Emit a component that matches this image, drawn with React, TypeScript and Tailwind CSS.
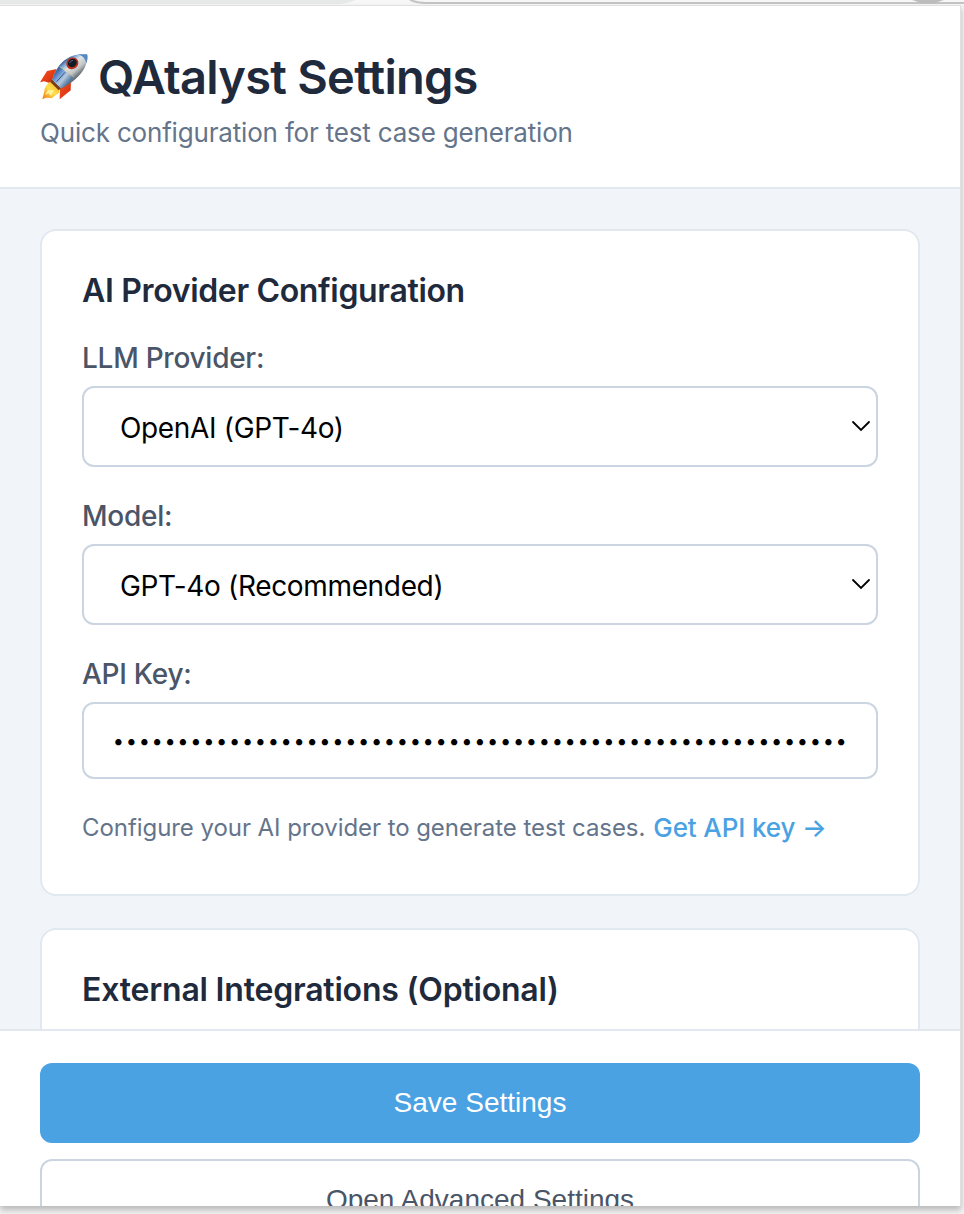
import React from "react";

function Rocket() {
  return (
    <svg className="h-[50px] w-[52px] shrink-0" viewBox="24 36 156 150" aria-hidden="true">
      <defs>
        <linearGradient id="hull" gradientUnits="userSpaceOnUse" x1="100" y1="62" x2="142" y2="112">
          <stop offset="0" stopColor="#2f5788" />
          <stop offset="0.18" stopColor="#7ba6d8" />
          <stop offset="0.38" stopColor="#dfe5e6" />
          <stop offset="0.7" stopColor="#c3c6c5" />
          <stop offset="1" stopColor="#59636c" />
        </linearGradient>
        <linearGradient id="body" gradientUnits="userSpaceOnUse" x1="74" y1="96" x2="116" y2="132">
          <stop offset="0" stopColor="#34598a" />
          <stop offset="0.3" stopColor="#6f9ddb" />
          <stop offset="0.6" stopColor="#b5c9dc" />
          <stop offset="1" stopColor="#3f6697" />
        </linearGradient>
        <linearGradient id="fin" x1="0" y1="0" x2="1" y2="1">
          <stop offset="0" stopColor="#f4511d" />
          <stop offset="0.6" stopColor="#e23a15" />
          <stop offset="1" stopColor="#98200e" />
        </linearGradient>
        <linearGradient id="flame" x1="1" y1="0" x2="0" y2="1">
          <stop offset="0" stopColor="#f6a81c" />
          <stop offset="0.5" stopColor="#ffe04d" />
          <stop offset="1" stopColor="#f07818" />
        </linearGradient>
      </defs>
      <path d="M80 87 L51 93 L30 127 L42 124 L66 131 Z" fill="url(#fin)" />
      <path d="M90 147 L123 120 L122 151 L89 178 Z" fill="url(#fin)" />
      <path d="M64 123 C54 128 42 144 43 154 L37 178 L48 173 L65 175 L87 158 L88 145 Z" fill="url(#flame)" />
      <path d="M54 150 L45 165 L55 160 L63 167 L72 151" fill="#fff39a" />
      <path d="M67 118 L94 145 L86 151 L60 125 Z" fill="#7d3c19" />
      <path d="M67 119 C72 98 88 70 108 58 C128 43 148 42 171 43 C174 48 172 66 165 81 C153 107 121 134 93 145 Z" fill="url(#hull)" />
      <path d="M67 119 C70 105 79 91 88 80 L131 112 C119 128 106 139 93 145 Z" fill="url(#body)" />
      <path d="M143 43 L171 43 C174 48 173 59 169 70 C166 55 157 47 143 43 Z" fill="#5487c5" />
      <path d="M89 80 Q112 88 131 112" fill="none" stroke="#e2c36f" strokeWidth="2" />
      <path d="M80 125 L105 97" stroke="#3d5571" strokeWidth="3" />
      <ellipse cx="127" cy="70" rx="19" ry="17" transform="rotate(-38 127 70)" fill="#b9301d" />
      <ellipse cx="127" cy="69" rx="14" ry="12" transform="rotate(-38 127 69)" fill="#151b25" />
      <path d="M119 69 Q120 62 129 61" stroke="#55637a" strokeWidth="3" fill="none" />
    </svg>
  );
}

function FieldLabel({ text }: { text: string }) {
  return (
    <div className="mb-2 h-[42px] pt-[5px] text-[28px] leading-[34px] font-medium tracking-[-0.26px] whitespace-nowrap text-[#4a5568]">
      {text}
    </div>
  );
}

function SelectField({ label, value }: { label: string; value: string }) {
  return (
    <div className="mb-[27px]">
      <FieldLabel text={label} />
      <div className="flex h-[81px] items-center justify-between rounded-xl border-2 border-[#cbd5e1] bg-white pr-[5px] pl-[36px] text-[28px] text-black">
        <span className="pt-[2px] tracking-[-0.34px] whitespace-nowrap">{value}</span>
        <svg className="mb-[2px] h-3 w-5" viewBox="0 0 20 12" fill="none" stroke="black" strokeWidth="1.8" strokeLinecap="round">
          <path d="M2 2 L10 10 L18 2" />
        </svg>
      </div>
    </div>
  );
}

const keyCharacters = Array.from("•".repeat(57));

export default function App() {
  return (
    <div className="relative flex h-[1214px] w-[964px] flex-col overflow-hidden bg-[#f3f3f3] font-['Inter','Liberation_Sans',sans-serif]">
      <svg className="h-[5px] w-full shrink-0" viewBox="0 0 964 5">
        <rect width="964" height="5" fill="#f7f7f7" />
        <path d="M0 0 H355 Q348 4 338 4 H0 Z" fill="#e7e9e8" />
        <path d="M409 -1 Q415 3 426 3 H964" fill="none" stroke="#c4c4c4" strokeWidth="2" />
        <path d="M912 0 H944 Q928 7 912 0" fill="#bdbdbd" />
      </svg>
      <div className="flex h-[1201px] w-[961px] shrink-0 flex-col overflow-hidden border-t border-r border-[#e0e0e0] bg-white shadow-[0_4px_6px_rgba(0,0,0,0.24)]">
        <header className="h-[183px] shrink-0 border-b-2 border-[#e2e8f0] pl-[38px]">
          <div className="flex h-[102px] items-end pb-[6px]">
            <Rocket />
            <h1 className="ml-[8px] text-[47px] leading-[50px] font-semibold tracking-[-0.74px] whitespace-nowrap text-[#1f2a3d]">QAtalyst Settings</h1>
          </div>
          <p className="ml-[2px] pt-[9px] text-[26px] leading-[32px] tracking-[-0.18px] whitespace-nowrap text-[#64748b]">Quick configuration for test case generation</p>
        </header>
        <main className="h-[840px] shrink-0 overflow-hidden bg-[#f1f5fa] px-10 pt-10">
          <section className="h-[667px] rounded-2xl border-2 border-[#e2e8f0] bg-white px-10 pt-[38px]">
            <h2 className="mb-[23px] text-[32px] leading-[44px] font-semibold tracking-[-0.34px] whitespace-nowrap text-[#1f2a3d]">AI Provider Configuration</h2>
            <SelectField label="LLM Provider:" value="OpenAI (GPT-4o)" />
            <SelectField label="Model:" value="GPT-4o (Recommended)" />
            <FieldLabel text="API Key:" />
            <div className="flex h-[77px] items-center rounded-xl border-2 border-[#cbd5e1] pl-[28px]">
              {keyCharacters.map((character, index) => (
                <span key={index} className="w-[12.91px] shrink-0 text-center text-[20px] leading-[30px] text-black">{character}</span>
              ))}
            </div>
            <p className="mt-[31px] flex items-center gap-2 leading-[34px] whitespace-nowrap">
              <span className="pt-px text-[24px] tracking-[-0.06px] text-[#64748b]">Configure your AI provider to generate test cases.</span>
              <a className="text-[26px] font-medium tracking-[-0.12px] text-[#4aa2e3]">Get API key →</a>
            </p>
          </section>
          <section className="mt-8 h-[667px] rounded-2xl border-2 border-[#e2e8f0] bg-white px-10 pt-[38px]">
            <h2 className="text-[32px] leading-[44px] font-semibold tracking-[-0.2px] whitespace-nowrap text-[#1f2a3d]">External Integrations (Optional)</h2>
          </section>
        </main>
        <footer className="flex h-[177px] shrink-0 flex-col gap-4 overflow-hidden border-t-2 border-[#e2e8f0] bg-white px-10 pt-8 font-['Liberation_Sans',Arial,sans-serif]">
          <button className="h-20 shrink-0 rounded-xl bg-[#4aa2e3] text-[28px] text-white">Save Settings</button>
          <button className="h-[81px] shrink-0 rounded-xl border-2 border-[#cbd5e1] bg-white pt-px text-[28px] text-[#4a5568]">Open Advanced Settings</button>
        </footer>
      </div>
    </div>
  );
}
